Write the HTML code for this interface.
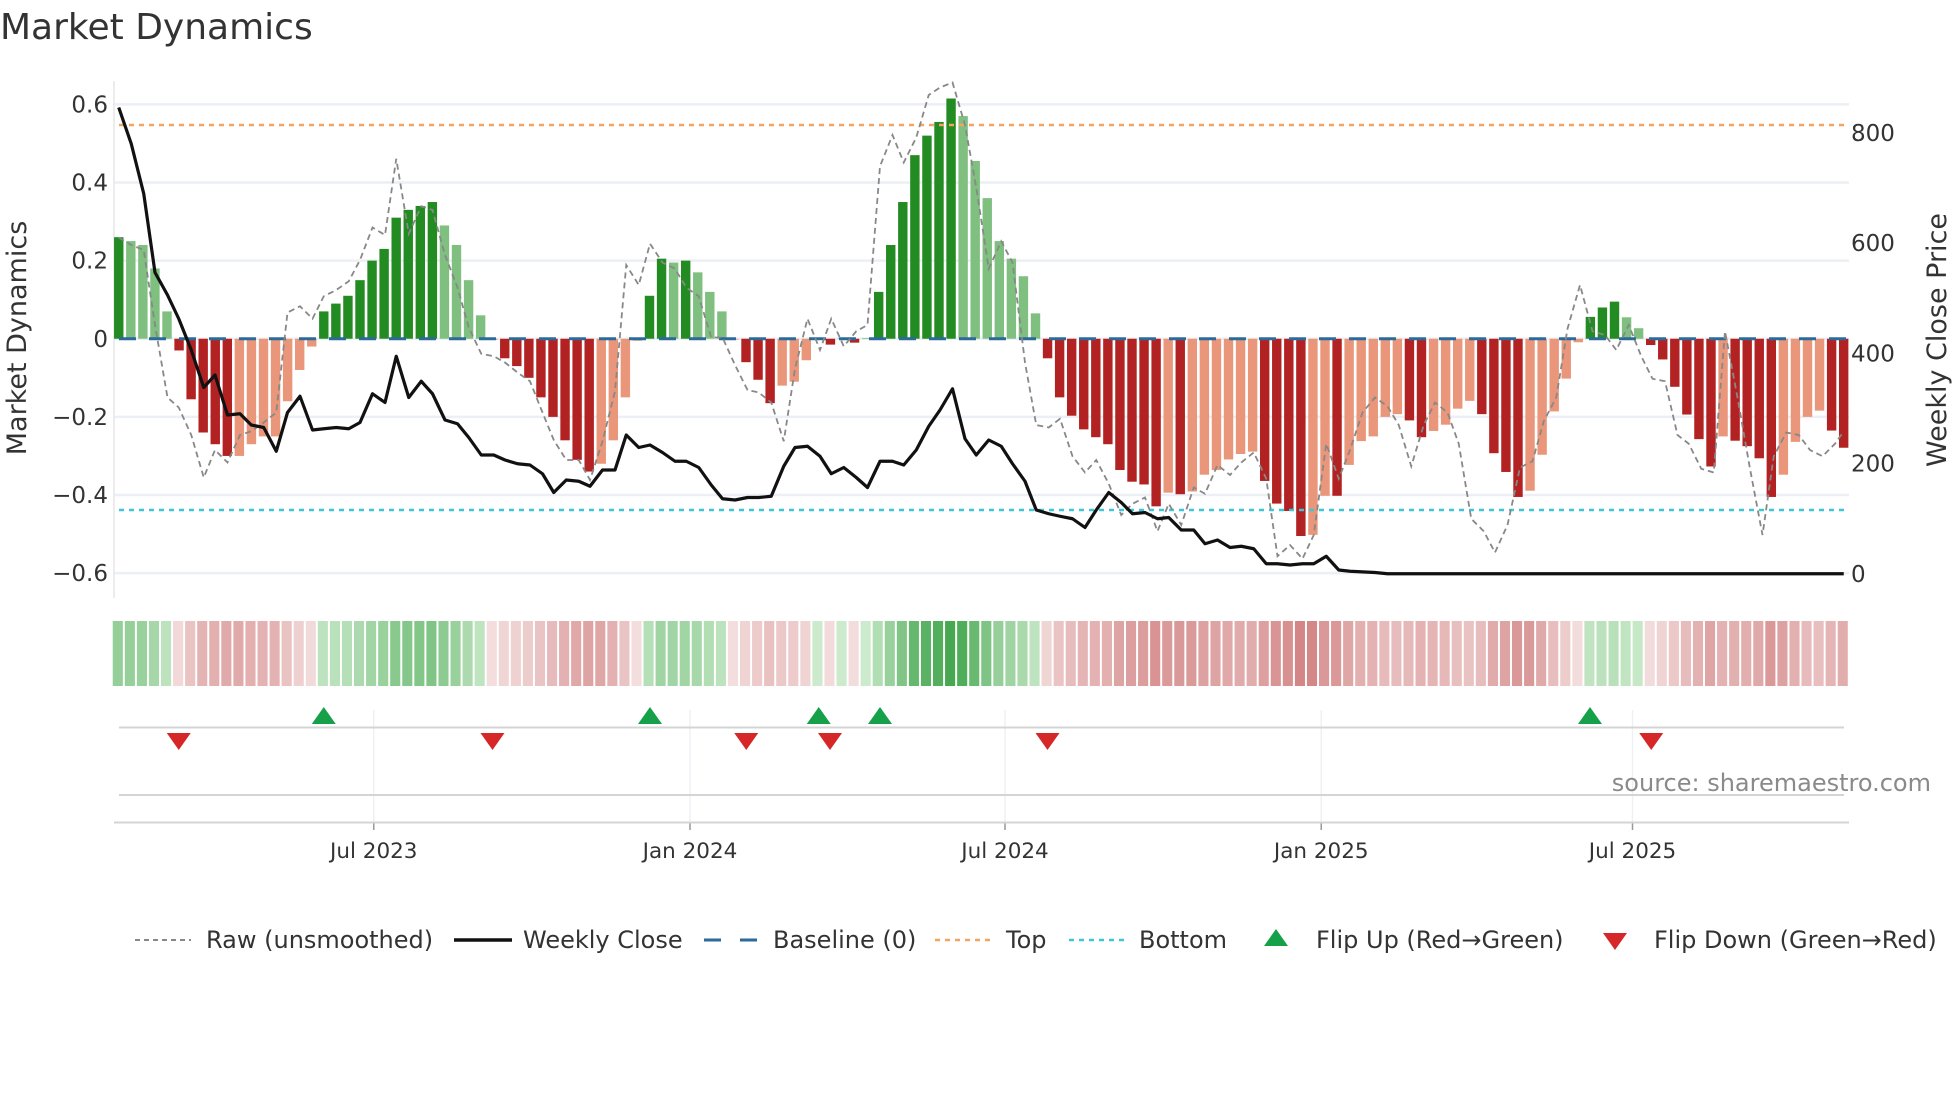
<!DOCTYPE html>
<html><head><meta charset="utf-8">
<style>
html,body{margin:0;padding:0;background:#fff;width:1960px;height:1102px;overflow:hidden}
svg text{font-family:"DejaVu Sans","Liberation Sans",sans-serif;fill:#333}
</style></head><body>
<svg id="s" width="1960" height="1102" viewBox="0 0 1960 1102" xmlns="http://www.w3.org/2000/svg">
<text x="0" y="39" font-size="36">Market Dynamics</text>
<g id="g"></g>
<text x="1931" y="791" font-size="24" text-anchor="end" style="fill:#8a8a8a">source: sharemaestro.com</text>
<text transform="translate(26,338) rotate(-90)" font-size="27" text-anchor="middle">Market Dynamics</text>
<text transform="translate(1946,340) rotate(-90)" font-size="27" text-anchor="middle">Weekly Close Price</text>
</svg>
<script>
var S=1.25,g=document.getElementById('g'),h='';
function X(i){return (95+i*9.65)*S}
function Yv(v){return (271-v*312.5)*S}
[0.6,0.4,0.2,0,-0.2,-0.4,-0.6].forEach(function(v){var y=Yv(v);h+='<line x1="115" x2="1849" y1="'+y+'" y2="'+y+'" stroke="#eceff3" stroke-width="2.5"/>';
h+='<text x="108" y="'+(y+8)+'" font-size="23" text-anchor="end">'+(v==0?'0':(v<0?'\u2212':'')+Math.abs(v).toFixed(1))+'</text>';});
[800,600,400,200,0].forEach(function(p){var y=(459-0.441*p)*S;h+='<text x="1851" y="'+(y+8)+'" font-size="23">'+p+'</text>';});
h+='<line x1="114" x2="114" y1="81" y2="598" stroke="#e6e6e6" stroke-width="1.5"/>';
var B=[[.26,1],[.25,0],[.24,0],[.18,0],[.07,0],[-.03,1],[-.155,1],[-.24,1],[-.27,1],[-.30,1],[-.30,0],[-.27,0],[-.25,0],[-.25,0],[-.16,0],[-.08,0],[-.02,0],
[.07,1],[.09,1],[.11,1],[.15,1],[.20,1],[.23,1],[.31,1],[.33,1],[.34,1],[.35,1],[.29,0],[.24,0],[.15,0],[.06,0],[-.003,0],
[-.05,1],[-.07,1],[-.10,1],[-.15,1],[-.20,1],[-.26,1],[-.31,1],[-.34,1],[-.32,0],[-.26,0],[-.15,0],[-.005,0],
[.11,1],[.205,1],[.195,0],[.20,1],[.17,0],[.12,0],[.07,0],[-.002,0],[-.06,1],[-.105,1],[-.165,1],[-.12,0],[-.11,0],[-.055,0],[.002,0],[-.015,1],[.002,0],[-.01,1],[.002,0],
[.12,1],[.24,1],[.35,1],[.47,1],[.52,1],[.555,1],[.615,1],[.57,0],[.455,0],[.36,0],[.25,0],[.205,0],[.16,0],[.065,0],
[-.05,1],[-.15,1],[-.197,1],[-.232,1],[-.252,1],[-.27,1],[-.336,1],[-.366,1],[-.373,1],[-.429,1],[-.394,0],[-.398,1],[-.391,0],[-.348,0],[-.336,0],[-.309,0],[-.295,0],[-.289,0],
[-.364,1],[-.422,1],[-.441,1],[-.505,1],[-.502,0],[-.402,0],[-.402,1],[-.323,0],[-.262,0],[-.25,0],[-.2,0],[-.193,0],[-.209,1],[-.252,1],[-.236,0],[-.22,0],[-.179,0],[-.159,0],
[-.193,1],[-.293,1],[-.341,1],[-.405,1],[-.389,0],[-.297,0],[-.186,0],[-.102,0],[-.009,0],[.056,1],[.08,1],[.095,1],[.055,0],[.027,0],
[-.016,1],[-.053,1],[-.123,1],[-.194,1],[-.257,1],[-.327,1],[-.25,0],[-.261,1],[-.275,1],[-.306,1],[-.405,1],[-.348,0],[-.264,0],[-.2,0],[-.184,0],[-.235,1],[-.279,1]];
var y0=Yv(0);
B.forEach(function(b,i){var v=b[0],y=Yv(v),x=X(i)-4.7;var c=v>=0?(b[1]?'#228b22':'#7fbf7f'):(b[1]?'#b22222':'#e9967a');
h+='<rect x="'+x+'" y="'+Math.min(y,y0)+'" width="9.4" height="'+Math.max(Math.abs(y-y0),0.8)+'" fill="'+c+'"/>';
var a=Math.min(1,Math.abs(v)/0.62),r,gg,bb;
if(v>=0){r=205-(205-70)*a;gg=235-(235-168)*a;bb=205-(205-80)*a;}else{r=244-(244-205)*a;gg=222-(222-115)*a;bb=222-(222-115)*a;}
h+='<rect x="'+(X(i)-6)+'" y="621" width="10.1" height="65" fill="rgb('+(r|0)+','+(gg|0)+','+(bb|0)+')"/>';});
h+='<line x1="119" x2="1849" y1="'+(100*S)+'" y2="'+(100*S)+'" stroke="#f4a460" stroke-width="2.5" stroke-dasharray="5,5"/>';
h+='<line x1="119" x2="1849" y1="'+(408*S)+'" y2="'+(408*S)+'" stroke="#40c4d8" stroke-width="2.5" stroke-dasharray="5,5"/>';
h+='<line x1="119" x2="1849" y1="'+y0+'" y2="'+y0+'" stroke="#2b6a9a" stroke-width="3" stroke-dasharray="17,13"/>';
var R=[[95,190],[105,196],[115,200],[124,260],[134,318],[143,326],[153,348],[163,382],[172,360],[182,370],[192,348],[201,345],[211,338],[221,330],[230,250],[240,245],[250,255],[259,237],[269,232],[279,225],[288,208],[298,182],[308,188],[317,127],[327,187],[337,165],[346,168],[356,204],[366,230],[375,262],[385,283],[395,285],[404,290],[414,298],[424,305],[434,330],[443,352],[453,368],[463,368],[472,384],[482,353],[492,313],[501,212],[511,228],[520,195],[530,210],[540,215],[549,230],[559,237],[569,270],[578,270],[588,292],[598,312],[607,314],[617,322],[627,353],[636,295],[646,255],[656,280],[665,255],[675,277],[685,265],[694,260],[704,133],[714,108],[723,130],[733,110],[743,76],[752,70],[762,66],[772,100],[781,150],[791,215],[801,193],[810,210],[820,290],[829,340],[839,342],[848,335],[858,365],[868,378],[877,368],[887,387],[897,412],[906,403],[916,398],[926,425],[935,403],[945,420],[955,390],[964,395],[974,372],[984,380],[993,370],[1003,362],[1013,383],[1022,445],[1032,436],[1042,447],[1051,428],[1061,355],[1071,383],[1080,360],[1090,330],[1100,318],[1110,325],[1119,340],[1129,373],[1139,340],[1148,322],[1158,330],[1167,355],[1177,415],[1187,425],[1196,442],[1206,420],[1216,374],[1226,369],[1235,337],[1245,318],[1254,263],[1264,228],[1274,265],[1284,268],[1293,280],[1303,260],[1313,285],[1322,303],[1332,305],[1342,348],[1351,355],[1361,375],[1371,378],[1380,265],[1390,318],[1400,375],[1410,428],[1419,365],[1429,346],[1439,348],[1448,360],[1458,365],[1468,355],[1475,345]];
h+='<polyline fill="none" stroke="#888" stroke-width="1.8" stroke-dasharray="6,4" points="'+R.map(function(p){return p[0]*S+','+p[1]*S}).join(' ')+'"/>';
var P=[[95,86],[105,115],[115,155],[124,218],[134,236],[143,255],[153,280],[163,310],[172,300],[182,332],[192,331],[201,340],[211,342],[221,361],[230,330],[240,317],[250,344],[259,343],[269,342],[279,343],[288,338],[298,315],[308,322],[317,285],[327,318],[337,305],[346,315],[356,336],[366,339],[375,350],[385,364],[395,364],[404,368],[414,371],[424,372],[434,379],[443,394],[453,384],[463,385],[472,389],[482,376],[492,376],[501,348],[511,358],[520,356],[530,362],[540,369],[549,369],[559,374],[569,388],[578,399],[588,400],[598,398],[607,398],[617,397],[627,373],[636,358],[646,357],[656,365],[665,379],[675,374],[685,382],[694,390],[704,369],[714,369],[723,372],[733,360],[743,341],[752,328],[762,311],[772,351],[781,364],[791,352],[801,357],[810,371],[820,385],[829,408],[839,411],[848,413],[858,415],[868,422],[877,408],[887,394],[897,402],[906,411],[916,410],[926,415],[935,414],[945,424],[955,424],[964,435],[974,432],[984,438],[993,437],[1003,439],[1013,451],[1022,451],[1032,452],[1042,451],[1051,451],[1061,445],[1071,456],[1080,457],[1100,458],[1110,459],[1475,459]];
h+='<polyline fill="none" stroke="#111" stroke-width="3.2" stroke-linejoin="round" points="'+P.map(function(p){return p[0]*S+','+p[1]*S}).join(' ')+'"/>';
[299,552,804,1057,1306].forEach(function(x){h+='<line x1="'+x*S+'" x2="'+x*S+'" y1="710" y2="822" stroke="#eef0f4" stroke-width="1.5"/><line x1="'+x*S+'" x2="'+x*S+'" y1="822" y2="830" stroke="#999" stroke-width="1.5"/>';});
h+='<line x1="119" x2="1844" y1="727.5" y2="727.5" stroke="#d4d4d4" stroke-width="2"/>';
h+='<line x1="119" x2="1844" y1="795" y2="795" stroke="#d4d4d4" stroke-width="2"/>';
h+='<line x1="114" x2="1849" y1="822.5" y2="822.5" stroke="#d4d4d4" stroke-width="2"/>';
[['Jul 2023',299],['Jan 2024',552],['Jul 2024',804],['Jan 2025',1057],['Jul 2025',1306]].forEach(function(t){h+='<text x="'+t[1]*S+'" y="858" font-size="21.5" text-anchor="middle">'+t[0]+'</text>';});
function up(x,y){return '<polygon points="'+(x-12)+','+(y+8)+' '+(x+12)+','+(y+8)+' '+x+','+(y-9)+'" fill="#17a04a"/>'}
function dn(x,y){return '<polygon points="'+(x-12)+','+(y-8)+' '+(x+12)+','+(y-8)+' '+x+','+(y+9)+'" fill="#d62728"/>'}
[259,520,655,704,1272].forEach(function(x){h+=up(x*S,716);});
[143,394,597,664,838,1321].forEach(function(x){h+=dn(x*S,741);});
var ly=940,fs=24;
h+='<line x1="135" x2="191" y1="'+ly+'" y2="'+ly+'" stroke="#888" stroke-width="2" stroke-dasharray="5,4"/><text x="206" y="'+(ly+8)+'" font-size="'+fs+'">Raw (unsmoothed)</text>';
h+='<line x1="454" x2="512" y1="'+ly+'" y2="'+ly+'" stroke="#111" stroke-width="3.5"/><text x="523" y="'+(ly+8)+'" font-size="'+fs+'">Weekly Close</text>';
h+='<line x1="704" x2="758" y1="'+ly+'" y2="'+ly+'" stroke="#2b6a9a" stroke-width="3" stroke-dasharray="17,19"/><text x="773" y="'+(ly+8)+'" font-size="'+fs+'">Baseline (0)</text>';
h+='<line x1="935" x2="990" y1="'+ly+'" y2="'+ly+'" stroke="#f4a460" stroke-width="2.5" stroke-dasharray="5,5"/><text x="1006" y="'+(ly+8)+'" font-size="'+fs+'">Top</text>';
h+='<line x1="1069" x2="1124" y1="'+ly+'" y2="'+ly+'" stroke="#40c4d8" stroke-width="2.5" stroke-dasharray="5,5"/><text x="1139" y="'+(ly+8)+'" font-size="'+fs+'">Bottom</text>';
h+=up(1276,ly-2)+'<text x="1316" y="'+(ly+8)+'" font-size="'+fs+'">Flip Up (Red\u2192Green)</text>';
h+=dn(1615,ly+1)+'<text x="1654" y="'+(ly+8)+'" font-size="'+fs+'">Flip Down (Green\u2192Red)</text>';
g.innerHTML=h;
</script>
</body></html>
